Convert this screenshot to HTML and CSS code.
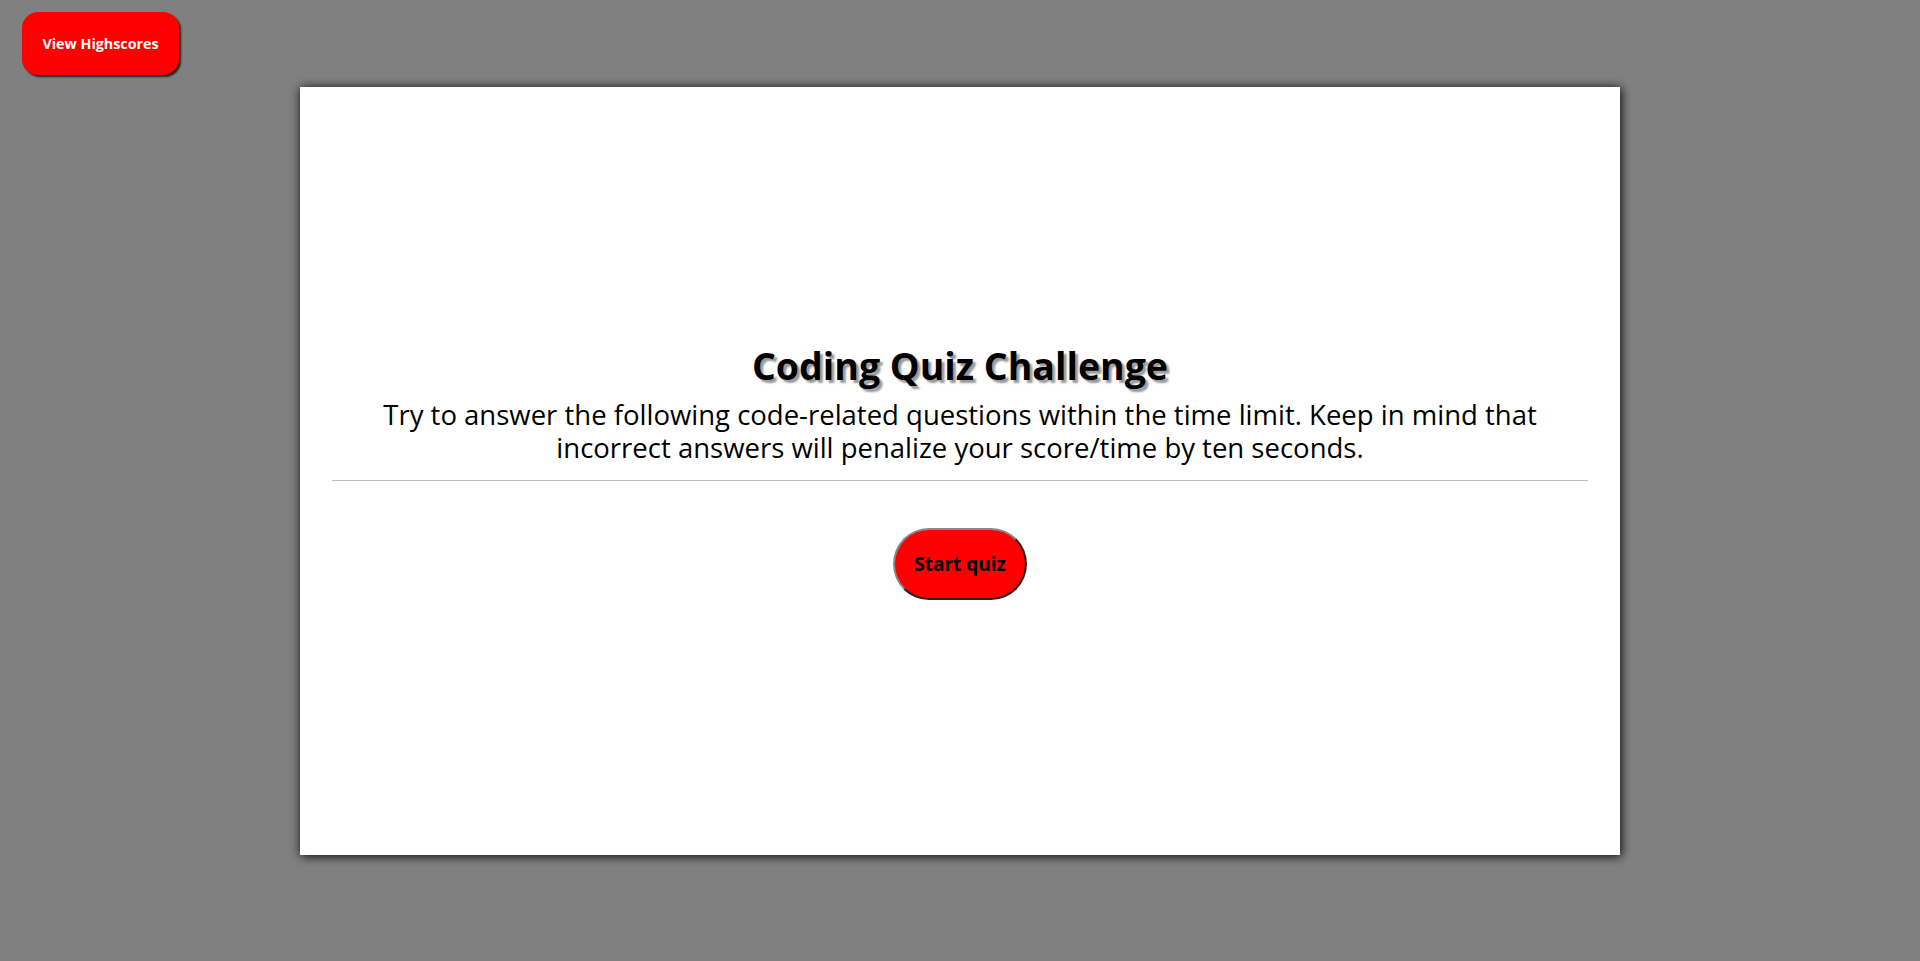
FILE: index.html
```html
<!DOCTYPE html>
<html lang="en">
<head>
<meta charset="utf-8">
<title>Coding Quiz Challenge</title>
<link rel="stylesheet" href="styles.css">
</head>
<body>
<header class="top-bar">
  <button class="highscores-btn" type="button">View Highscores</button>
</header>
<main class="card">
  <div class="intro">
    <h1 class="title">Coding Quiz Challenge</h1>
    <p class="description">Try to answer the following code-related questions within the time limit. Keep in mind that incorrect answers will penalize your score/time by ten seconds.</p>
  </div>
  <hr class="divider">
  <div class="actions">
    <button class="start-btn" type="button">Start quiz</button>
  </div>
</main>
</body>
</html>
```

FILE: styles.css
```css
html, body {
  margin: 0;
  padding: 0;
}

body {
  background: #808080;
  font-family: "Open Sans", "Noto Sans", sans-serif;
  height: 961px;
  overflow: hidden;
}

.top-bar {
  height: 87px;
  padding: 12px 0 0 22px;
  box-sizing: border-box;
}

.highscores-btn {
  width: 157px;
  height: 63px;
  border: none;
  border-radius: 16px;
  background: #ff0000;
  color: #ffffff;
  font-family: "Open Sans", "Noto Sans", sans-serif;
  font-weight: 700;
  font-size: 14.3px;
  box-shadow: 2px 2px 2px #222;
  padding: 0;
}

.card {
  width: 1320px;
  height: 768px;
  margin: 0 auto;
  background: #ffffff;
  box-shadow: 1px 1px 10px #000;
  display: flex;
  flex-direction: column;
  justify-content: center;
  padding: 0 32px;
  box-sizing: border-box;
}

.intro {
  text-align: center;
}

.title {
  margin: 0;
  font-size: 37.5px;
  font-weight: 700;
  color: #000;
  text-shadow: 3px 3px 2px #999;
  line-height: 1.3;
}

.description {
  margin: 8px 0 0;
  font-size: 27.5px;
  line-height: 33px;
  color: #000;
}

.divider {
  border: none;
  border-top: 1px solid #bbb;
  margin: 16px 0 0;
  height: 0;
}

.actions {
  display: flex;
  justify-content: center;
  padding-top: 47px;
}

.start-btn {
  width: 134px;
  height: 72px;
  border-radius: 36px;
  background: #ff0000;
  color: #000;
  font-family: "Open Sans", "Noto Sans", sans-serif;
  font-weight: 700;
  font-size: 19px;
  border: 2px solid;
  border-color: #888 #222 #222 #888;
  padding: 0;
}
```
